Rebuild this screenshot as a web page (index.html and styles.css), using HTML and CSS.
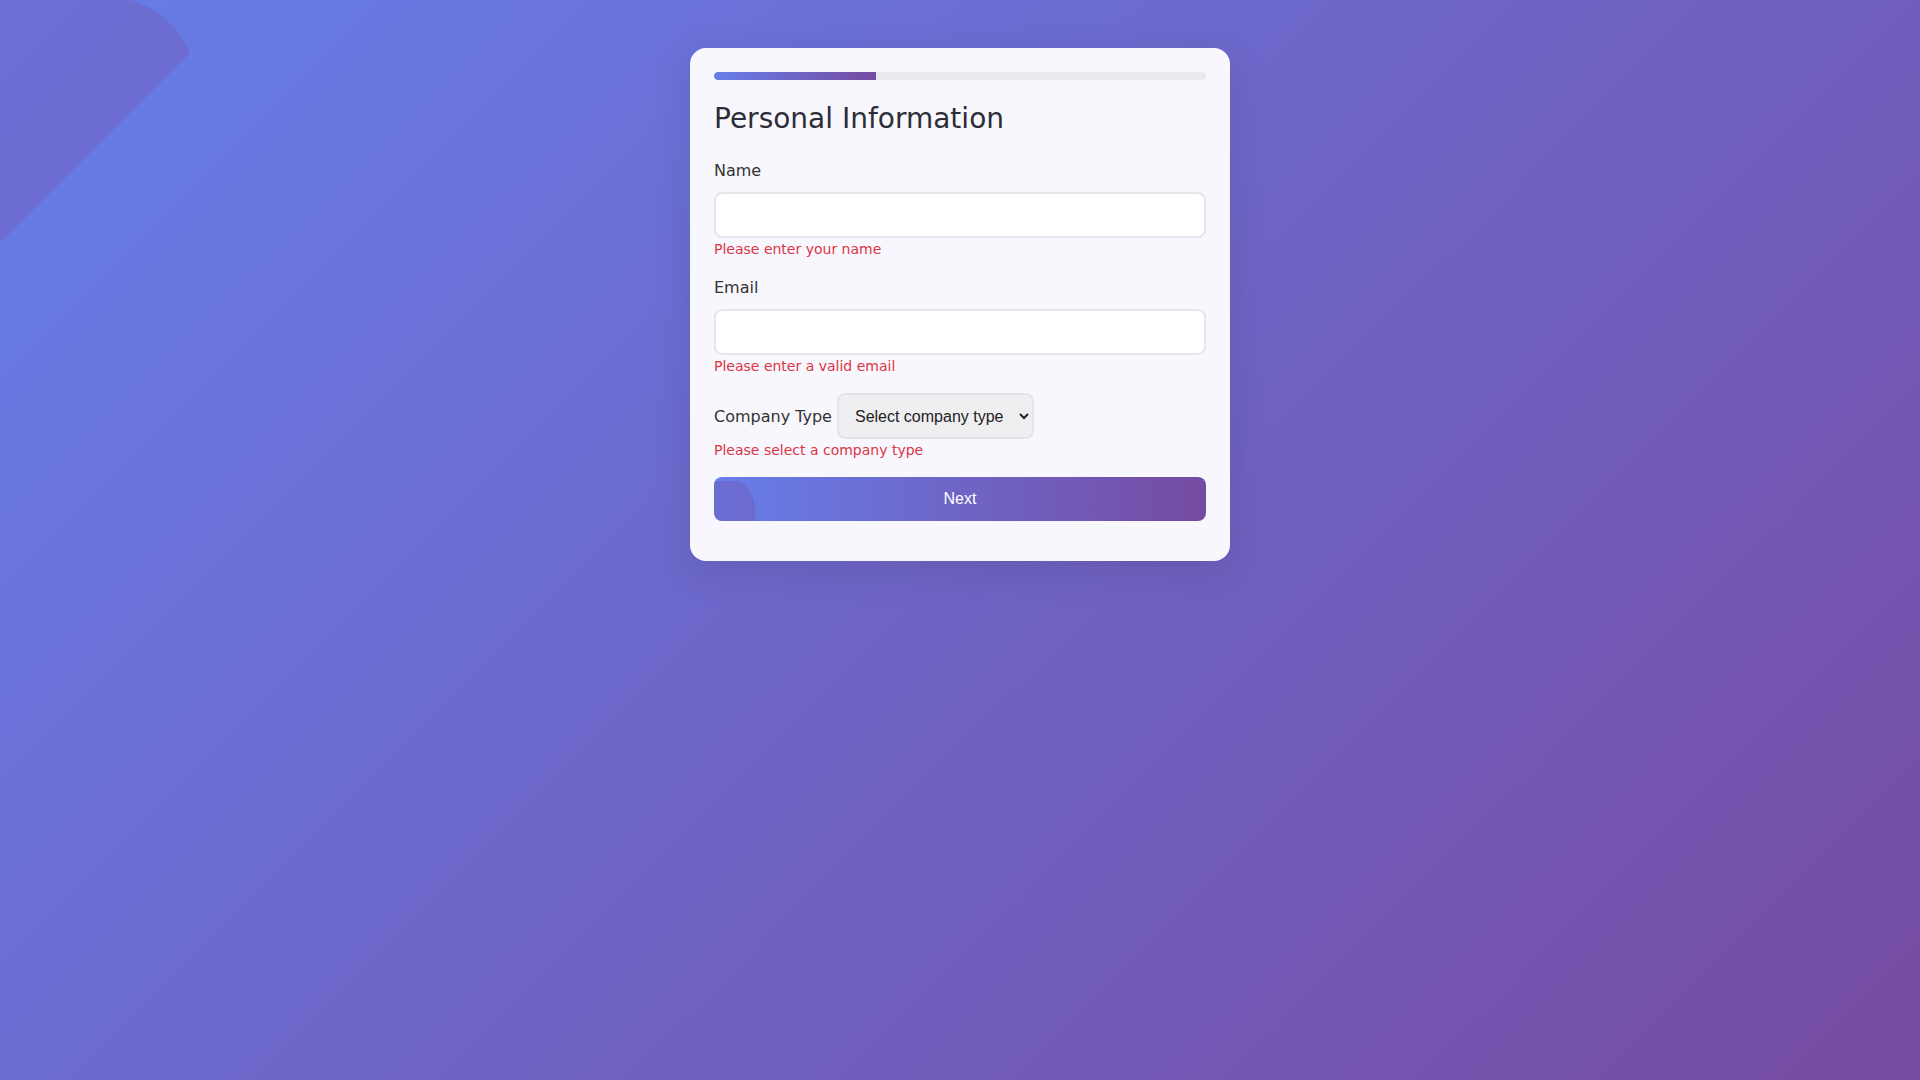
FILE: index.html
```html
<!DOCTYPE html>
<html lang="en">
<head>
    <meta charset="UTF-8">
    <meta name="viewport" content="width=device-width, initial-scale=1.0">
    <title>Multi-step Form</title>
    <link rel="stylesheet" href="styles.css">
</head>
<body>

    <svg class="corner-shape" width="200" height="250" viewBox="0 0 200 250">
        <path d="M0 0 H131 C152 6 178 24 190 53 L2 241 H0 Z"></path>
    </svg>

    <div class="page">
        <div class="card">
            <div class="progress">
                <div class="progress-fill"></div>
            </div>

            <h2>Personal Information</h2>

            <div class="field">
                <label for="name">Name</label>
                <input type="text" id="name">
                <div class="error">Please enter your name</div>
            </div>

            <div class="field">
                <label for="email">Email</label>
                <input type="email" id="email">
                <div class="error">Please enter a valid email</div>
            </div>

            <div class="field field-inline">
                <div class="inline-row">
                    <label for="companyType">Company Type</label>
                    <select id="companyType">
                        <option value="">Select company type</option>
                        <option value="startup">Startup</option>
                        <option value="smb">Small Business</option>
                        <option value="enterprise">Enterprise</option>
                    </select>
                </div>
                <div class="error">Please select a company type</div>
            </div>

            <button class="next-btn">Next</button>
        </div>
    </div>

</body>
</html>
```

FILE: styles.css
```css
html, body {
    margin: 0;
    padding: 0;
}
body {
    font-family: "DejaVu Sans", Verdana, sans-serif;
    min-height: 100vh;
    background: linear-gradient(135deg, #667eea 0%, #764ba2 100%);
    color: #333;
    overflow: hidden;
}
.corner-shape {
    position: absolute;
    top: 0;
    left: 0;
}
.corner-shape path {
    fill: rgba(118, 75, 162, 0.3);
}
.page {
    padding-top: 48px;
}
.card {
    width: 540px;
    box-sizing: border-box;
    margin: 0 auto;
    padding: 24px 24px 40px;
    background-color: #f8f7fd;
    border-radius: 16px;
    box-shadow: 0 10px 40px rgba(0, 0, 0, 0.1);
}
.progress {
    height: 8px;
    background-color: #e9e9ef;
    border-radius: 4px;
    overflow: hidden;
}
.progress-fill {
    width: 33%;
    height: 100%;
    background: linear-gradient(90deg, #667eea, #764ba2);
    border-radius: 4px 0 0 4px;
}
h2 {
    margin: 23px 0 26px;
    font-size: 28px;
    font-weight: normal;
    line-height: 32px;
    color: #2d2d38;
}
.field {
    margin-bottom: 20px;
}
.field label {
    display: block;
    font-size: 16px;
    line-height: 19px;
    margin-bottom: 12px;
    color: #333;
}
.field input {
    display: block;
    width: 100%;
    height: 46px;
    box-sizing: border-box;
    padding: 12px;
    font-size: 16px;
    border: 2px solid #e6e6ea;
    border-radius: 8px;
    background-color: #fff;
    outline: none;
}
.error {
    margin-top: 3px;
    font-size: 14px;
    line-height: 17px;
    color: #dc3545;
}
.field-inline {
    margin-top: -2px;
    margin-bottom: 18px;
}
.inline-row {
    display: flex;
    align-items: center;
    gap: 5px;
}
.inline-row label {
    margin-bottom: 0;
}
select {
    height: 46px;
    box-sizing: border-box;
    padding: 12px;
    font-family: "Liberation Sans", Arial, sans-serif;
    font-size: 16px;
    color: #222;
    background-color: #efeff1;
    border: 2px solid #e4e4e8;
    border-radius: 8px;
}
.next-btn {
    position: relative;
    overflow: hidden;
    display: block;
    width: 100%;
    padding: 12px;
    font-family: "Liberation Sans", Arial, sans-serif;
    font-size: 16px;
    line-height: 20px;
    color: white;
    background: linear-gradient(90deg, #667eea, #764ba2);
    border: none;
    border-radius: 8px;
    cursor: pointer;
}
.next-btn::before {
    content: "";
    position: absolute;
    left: 0;
    top: 4px;
    width: 41px;
    height: 60px;
    background: rgba(118, 75, 162, 0.32);
    border-top-right-radius: 20px 30px;
}
```
